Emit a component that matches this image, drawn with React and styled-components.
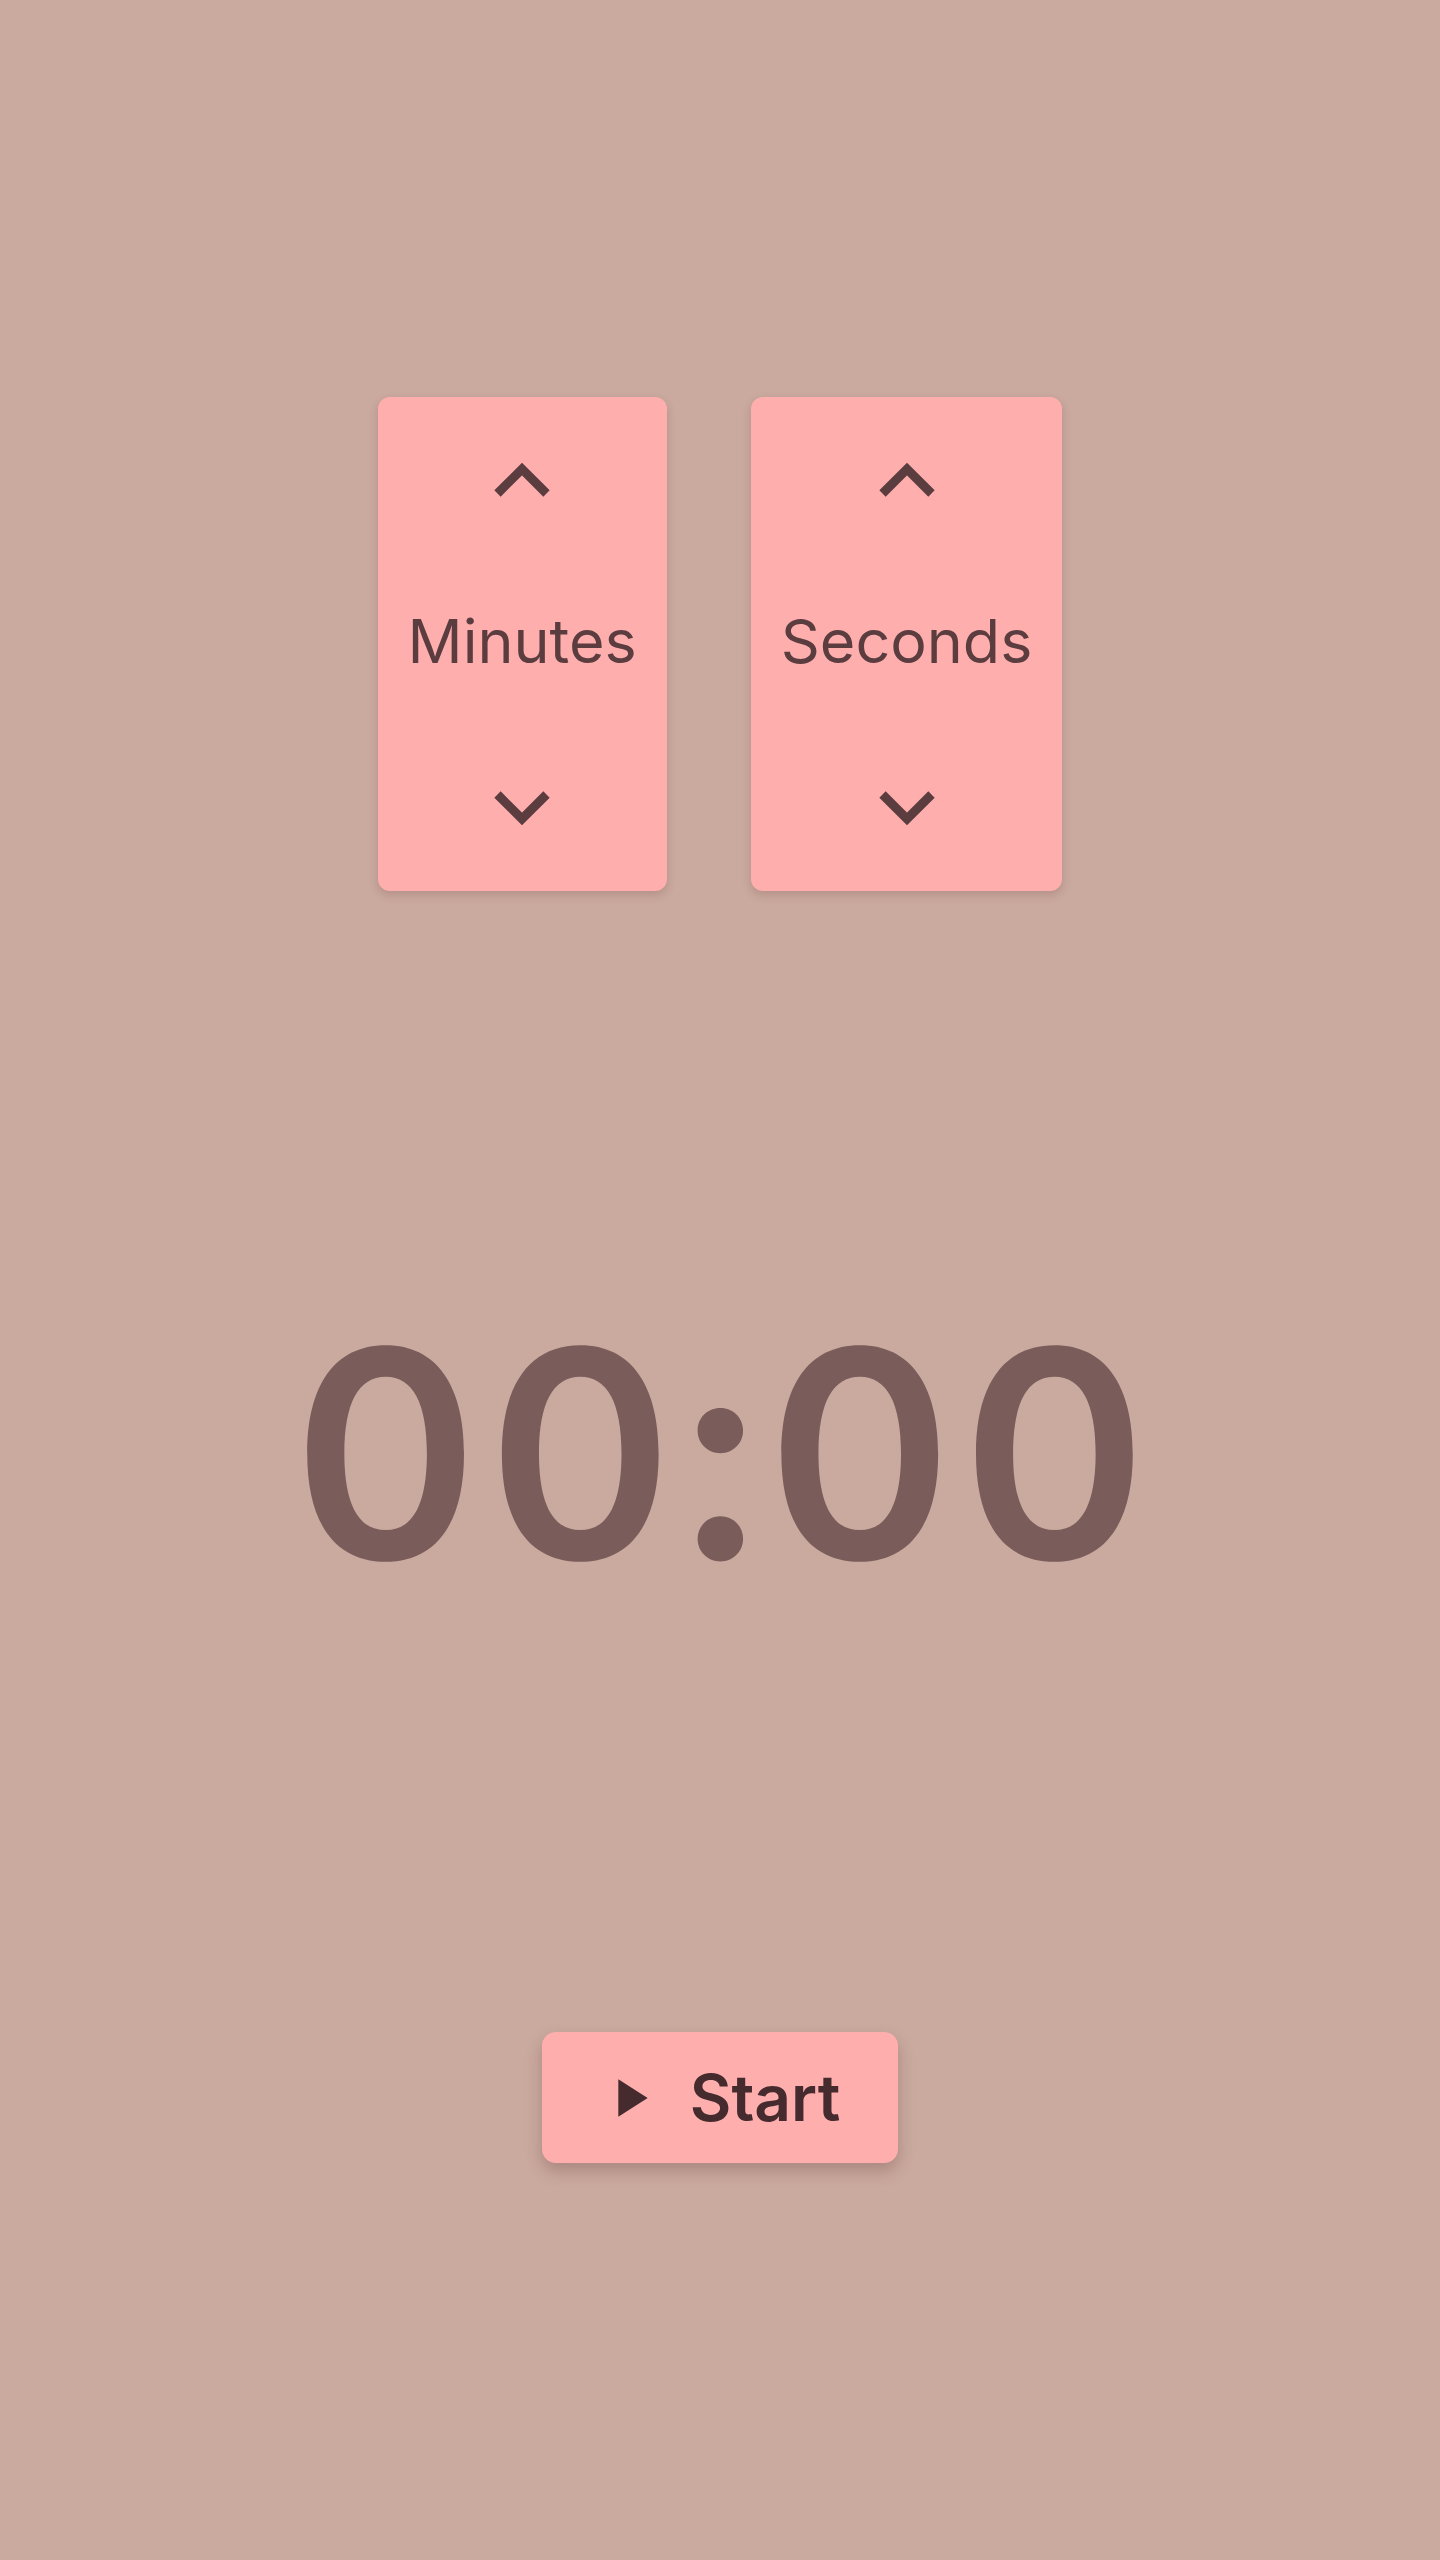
import React from "react";
import styled, { createGlobalStyle } from "styled-components";

const Global = createGlobalStyle`
  html, body {
    margin: 0;
    padding: 0;
    background: #caa99e;
  }
  body {
    font-family: Inter, "Noto Sans", "Liberation Sans", sans-serif;
  }
  * { box-sizing: border-box; }
`;

const Page = styled.main`
  min-height: 100vh;
  display: flex;
  flex-direction: column;
  align-items: center;
  justify-content: space-evenly;
  background: #caa99e;
`;

const Pickers = styled.section`
  display: flex;
  gap: 84px;
`;

const Card = styled.div`
  height: 494px;
  padding: 62px 30px;
  background: #ffaeae;
  border-radius: 12px;
  box-shadow: 0 4px 10px rgba(80, 40, 40, 0.18);
  display: flex;
  flex-direction: column;
  align-items: center;
  justify-content: space-between;
`;

const ArrowButton = styled.button`
  border: 0;
  background: transparent;
  padding: 0;
  width: 64px;
  height: 42px;
  display: flex;
  align-items: center;
  justify-content: center;
  cursor: pointer;
  color: #5b3d40;
`;

const Label = styled.span`
  font-size: 61px;
  font-weight: 400;
  color: #5b3d40;
  line-height: 1;
  white-space: nowrap;
  margin-top: -4px;
`;

const Timer = styled.div`
  height: 348px;
  padding: 0 0 16px 7px;
  display: flex;
  align-items: center;
  font-size: 290px;
  font-weight: 600;
  letter-spacing: 7px;
  font-variant-numeric: tabular-nums;
  color: #7a5d5a;
  line-height: 1;
`;

const StartButton = styled.button`
  height: 131px;
  padding: 0 58px 0 55px;
  border: 0;
  border-radius: 14px;
  background: #ffaeae;
  box-shadow: 0 8px 16px rgba(80, 40, 40, 0.25);
  display: flex;
  align-items: center;
  gap: 29px;
  color: #452b2e;
  font-family: Inter, "Noto Sans", "Liberation Sans", sans-serif;
  font-size: 64px;
  font-weight: 600;
  cursor: pointer;
`;

const Chevron = ({ down }) => (
  <svg width="56" height="36" viewBox="0 0 56 36">
    <polyline
      points={down ? "3.5,4.5 28,29 52.5,4.5" : "3.5,31.5 28,7 52.5,31.5"}
      fill="none"
      stroke="currentColor"
      strokeWidth="9"
      strokeLinecap="butt"
      strokeLinejoin="miter"
    />
  </svg>
);

const PlayIcon = () => (
  <svg width="64" height="64" viewBox="0 0 24 24">
    <path d="M8 5v14l11-7z" fill="currentColor" />
  </svg>
);

const Picker = ({ label }) => (
  <Card>
    <ArrowButton aria-label={`increase ${label}`}>
      <Chevron />
    </ArrowButton>
    <Label>{label}</Label>
    <ArrowButton aria-label={`decrease ${label}`}>
      <Chevron down />
    </ArrowButton>
  </Card>
);

export default function App() {
  return (
    <>
      <Global />
      <Page>
        <Pickers>
          <Picker label="Minutes" />
          <Picker label="Seconds" />
        </Pickers>
        <Timer>00:00</Timer>
        <StartButton>
          <PlayIcon />
          Start
        </StartButton>
      </Page>
    </>
  );
}
